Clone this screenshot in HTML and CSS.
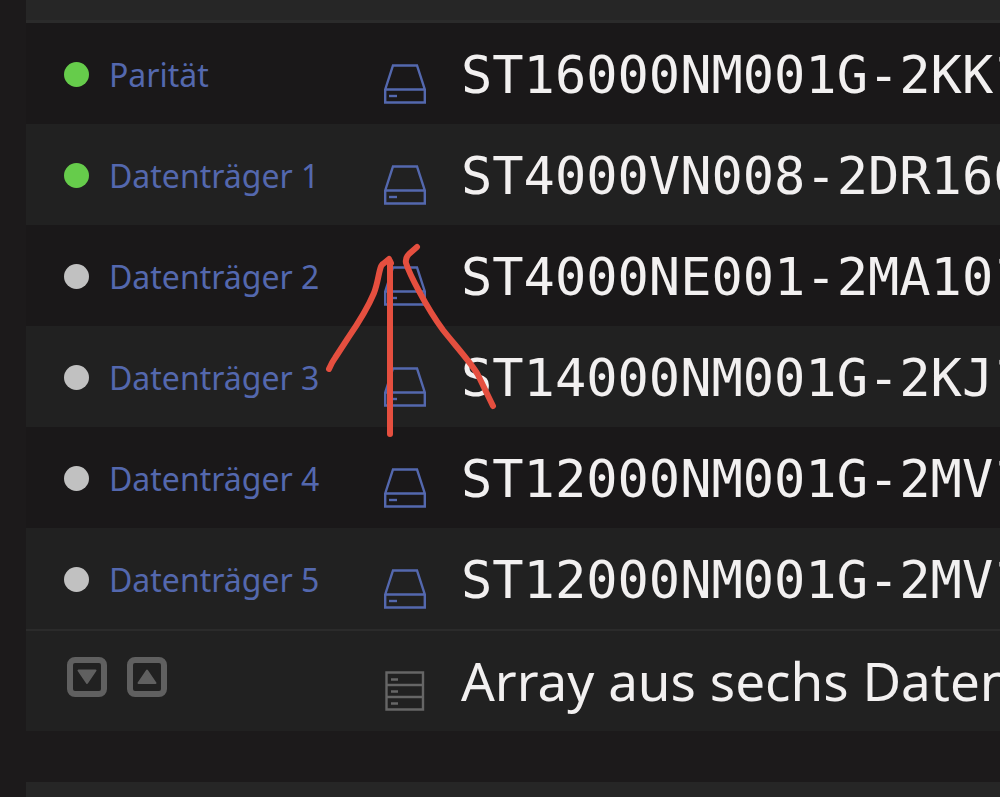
FILE: index.html
```
<!DOCTYPE html>
<html lang="de">
<head>
<meta charset="utf-8">
<title>Array</title>
<link rel="stylesheet" href="styles.css">
</head>
<body>
<svg class="symbols" width="0" height="0">
  <symbol id="disk" viewBox="0 0 42 40">
    <path d="M1.2 25.5L9 1.5h24L40.800 25.500V38.500H1.200ZM1 25.500H41" fill="none" stroke="currentColor" stroke-width="2.4"/>
    <path d="M5 32h8" fill="none" stroke="currentColor" stroke-width="2.4"/>
  </symbol>
  <symbol id="stack" viewBox="0 0 42 40">
    <path d="M2.500 1.500h36.500v37H2.500ZM2.500 14h36.500M2.500 26h36.500" fill="none" stroke="currentColor" stroke-width="2.4"/>
    <path d="M7 8.500h7M7 20.500h7M7 32.500h7" fill="none" stroke="currentColor" stroke-width="2.400"/>
  </symbol>
</svg>
<main class="array">
  <div class="bar top"></div>
  <table class="disks">
    <tbody>
    <tr>
      <td class="name"><div><span class="orb green"></span><a href="#parity">Parität</a></div></td>
      <td class="browse"><a href="#parity" aria-label="Parität"><svg class="icon"><use href="#disk"/></svg></a></td>
      <td class="ident">ST16000NM001G-2KK1</td>
    </tr>
    <tr>
      <td class="name"><div><span class="orb green"></span><a href="#disk1">Datenträger 1</a></div></td>
      <td class="browse"><a href="#disk1" aria-label="Datenträger 1"><svg class="icon"><use href="#disk"/></svg></a></td>
      <td class="ident">ST4000VN008-2DR166</td>
    </tr>
    <tr>
      <td class="name"><div><span class="orb grey"></span><a href="#disk2">Datenträger 2</a></div></td>
      <td class="browse"><a href="#disk2" aria-label="Datenträger 2"><svg class="icon"><use href="#disk"/></svg></a></td>
      <td class="ident">ST4000NE001-2MA101</td>
    </tr>
    <tr>
      <td class="name"><div><span class="orb grey"></span><a href="#disk3">Datenträger 3</a></div></td>
      <td class="browse"><a href="#disk3" aria-label="Datenträger 3"><svg class="icon"><use href="#disk"/></svg></a></td>
      <td class="ident">ST14000NM001G-2KJ1</td>
    </tr>
    <tr>
      <td class="name"><div><span class="orb grey"></span><a href="#disk4">Datenträger 4</a></div></td>
      <td class="browse"><a href="#disk4" aria-label="Datenträger 4"><svg class="icon"><use href="#disk"/></svg></a></td>
      <td class="ident">ST12000NM001G-2MV1</td>
    </tr>
    <tr>
      <td class="name"><div><span class="orb grey"></span><a href="#disk5">Datenträger 5</a></div></td>
      <td class="browse"><a href="#disk5" aria-label="Datenträger 5"><svg class="icon"><use href="#disk"/></svg></a></td>
      <td class="ident">ST12000NM001G-2MV1</td>
    </tr>
    </tbody>
    <tfoot>
    <tr>
      <td class="tools">
        <div class="buttons">
          <button type="button" aria-label="Spin down"><svg width="20" height="16" viewBox="0 0 20 16"><path d="M1.500 1.500h17L10 14Z" stroke-width="2"/></svg></button>
          <button type="button" aria-label="Spin up"><svg width="20" height="16" viewBox="0 0 20 16"><path d="M1.500 14h17L10 1.500Z" stroke-width="2"/></svg></button>
        </div>
      </td>
      <td class="browse"><svg class="icon"><use href="#stack"/></svg></td>
      <td class="total">Array aus sechs Daten</td>
    </tr>
    </tfoot>
  </table>
  <div class="bar"></div>
</main>
<!-- hand-drawn arrow over the disk icons -->
<svg class="arrow" width="180" height="200" viewBox="320 240 180 200">
  <path d="M329 369Q332 362 335 358L348 338Q366 312 374 293C379 280 379 266 383 264L389 259L391 263"/>
  <path d="M390 262V434"/>
  <path d="M417 247L409 254Q405 258 406 263C409 273 426 307 443 330C454 344 473 365 478 375L493 406"/>
</svg>
</body>
</html>
```
FILE: styles.css
```
body {
  margin: 0;
  background: #1c1a1b;
  color: #f2f0f0;
  font-family: "Noto Sans", sans-serif;
  overflow: hidden;
}
.symbols {
  display: none;
}
.array {
  padding-left: 26px;
}
.bar {
  height: 50px;
  background: #262626;
}
.bar.top {
  height: 20px;
  border-bottom: 3px solid #2b2b2b;
}
.disks {
  width: 100%;
  table-layout: fixed;
  border-collapse: separate;
  border-spacing: 0;
  margin-bottom: 51px;
}
.disks td {
  height: 101px;
  padding: 0;
  white-space: nowrap;
}
.disks tbody tr {
  background: #1a1819;
}
.disks tbody tr:nth-child(even),
.disks tfoot tr {
  background: #212121;
}
.disks a {
  color: #5468ae;
  text-decoration: none;
}
.disks .name,
.disks .tools {
  width: 320px;
  padding-left: 38px;
}
.name div {
  display: flex;
  align-items: center;
  gap: 20px;
  font-size: 32px;
  line-height: 44px;
}
.orb {
  width: 25px;
  height: 25px;
  border-radius: 50%;
}
.green {
  background: #66cc4b;
}
.grey {
  background: #c1c1c1;
}
.disks .name,
.disks .ident {
  padding-top: 2px;
  height: 99px;
}
.disks .browse {
  width: 77px;
  padding-top: 20px;
  height: 81px;
  color: #666;
}
.icon {
  display: block;
  width: 42px;
  height: 40px;
}
.ident {
  font-family: "DejaVu Sans Mono", monospace;
  font-size: 52px;
  line-height: 60px;
}
.total {
  font-size: 53px;
  line-height: 68px;
}
.disks tfoot td {
  border-top: 2px solid #2b2b2b;
  height: 100px;
}
.disks tfoot .browse {
  height: 80px;
}
.buttons {
  display: flex;
  gap: 20px;
  padding-left: 3px;
  padding-bottom: 8px;
}
.buttons button {
  display: flex;
  align-items: center;
  justify-content: center;
  width: 40px;
  height: 40px;
  padding: 0;
  border: 6px solid #606060;
  border-radius: 8px;
  background: none;
}
.buttons path {
  fill: #606060;
  stroke: #606060;
  stroke-linejoin: round;
}
.arrow {
  position: absolute;
  left: 320px;
  top: 240px;
  fill: none;
  stroke: #e54f3f;
  stroke-width: 6;
  stroke-linecap: round;
  stroke-linejoin: round;
}
```
